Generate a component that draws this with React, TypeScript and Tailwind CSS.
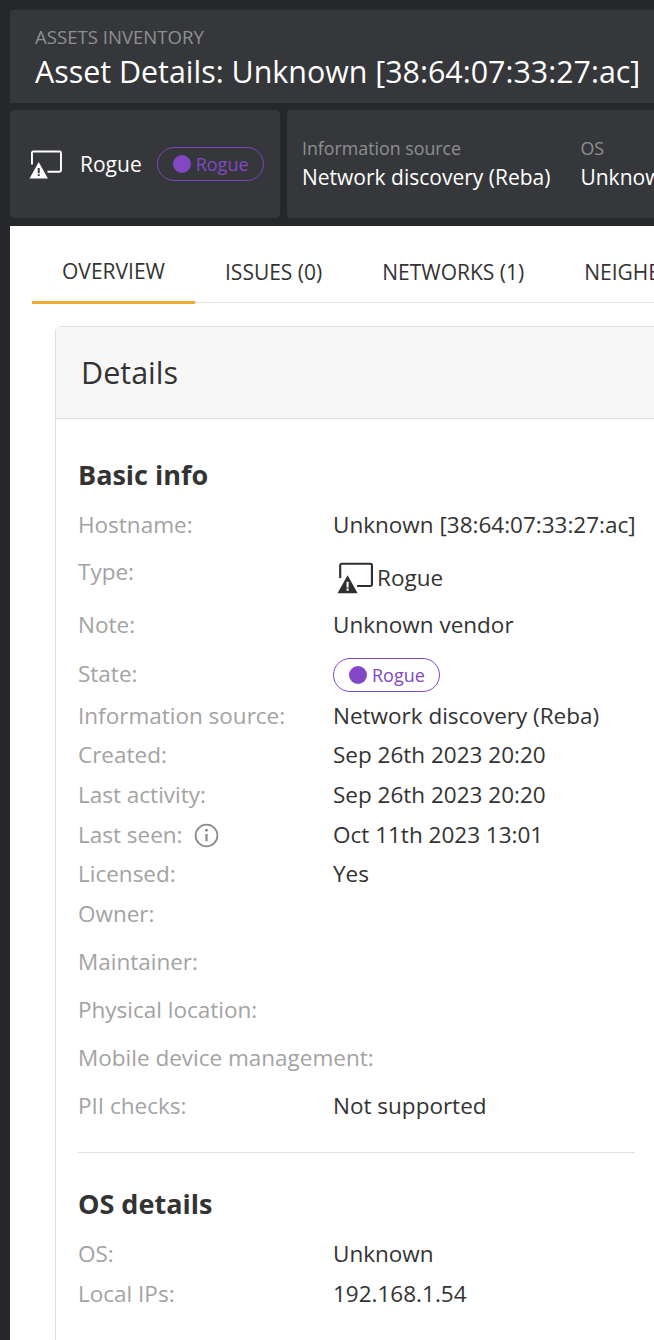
const font = "font-['Open_Sans',sans-serif]";

function RogueIcon({ className }: { className: string }) {
  return (
    <svg viewBox="0 0 34 30" fill="none" className={className}>
      <path d="M3 15V3a1.5 1.5 0 0 1 1.5-1.5h27A1.5 1.5 0 0 1 33 3v18a1.5 1.5 0 0 1-1.5 1.5H19" stroke="currentColor" strokeWidth="2" />
      <path fillRule="evenodd" clipRule="evenodd" d="M10 12.5 19.5 29.5H0.5ZM9 18.5h2v5.5H9ZM9 25h2v2H9Z" fill="currentColor" />
    </svg>
  );
}

function Badge() {
  return (
    <span className="mt-[1px] inline-flex h-[34px] w-[107px] items-center rounded-full border border-[#8347c6] pl-[15px] text-[18px] leading-[30px] text-[#8347c6]">
      <span className="mr-[5px] h-[18px] w-[18px] rounded-full bg-[#8347c6]" />
      Rogue
    </span>
  );
}

const rows: { label: string; value?: React.ReactNode; h: string }[] = [
  { label: "Hostname:", value: "Unknown [38:64:07:33:27:ac]", h: "h-[47px]" },
  {
    label: "Type:",
    value: (
      <span className="flex items-center pt-[6px]">
        <RogueIcon className="mr-[4px] ml-[4px] h-[32px] w-[36px] text-[#2f2f2f]" />
        Rogue
      </span>
    ),
    h: "h-[53px]",
  },
  { label: "Note:", value: "Unknown vendor", h: "h-[49px]" },
  { label: "State:", value: <Badge />, h: "h-[42px]" },
  { label: "Information source:", value: "Network discovery (Reba)", h: "h-[39px]" },
  { label: "Created:", value: "Sep 26th 2023 20:20", h: "h-[40px]" },
  { label: "Last activity:", value: "Sep 26th 2023 20:20", h: "h-[40px]" },
  { label: "Last seen:", value: "Oct 11th 2023 13:01", h: "h-[39px]" },
  { label: "Licensed:", value: "Yes", h: "h-[40px]" },
  { label: "Owner:", h: "h-[48px]" },
  { label: "Maintainer:", h: "h-[48px]" },
  { label: "Physical location:", h: "h-[48px]" },
  { label: "Mobile device management:", h: "h-[48px]" },
  { label: "PII checks:", value: "Not supported", h: "h-[40px]" },
];

export default function App() {
  return (
    <div className={`${font} h-[1340px] w-[654px] overflow-hidden bg-[#26272b] pt-[10px] pl-[10px]`}>
      <div className="h-[93px] w-[644px] rounded-tl-[3px] bg-[#36373a] pt-[15px] pl-[25px]">
        <div className="text-[18.6px] leading-[24px] text-[#8e8f91]">ASSETS INVENTORY</div>
        <div className="mt-[3px] text-[30.4px] leading-[40px] font-medium whitespace-nowrap text-white">Asset Details: Unknown [38:64:07:33:27:ac]</div>
      </div>

      <div className="mt-[7px] flex h-[108px] gap-[7px]">
        <div className="flex w-[270px] items-center rounded-[4px] bg-[#36373a] pl-[19px]">
          <RogueIcon className="h-[29px] w-[33px] text-white" />
          <span className="mt-[1px] ml-[18px] text-[21px] font-medium text-white">Rogue</span>
          <span className="ml-[15px] inline-flex h-[34px] w-[107px] items-center rounded-full border border-[#7a45b8] pl-[15px] text-[18px] text-[#8347c6]">
            <span className="mr-[5px] h-[18px] w-[18px] rounded-full bg-[#8347c6]" />
            Rogue
          </span>
        </div>
        <div className="flex w-[367px] gap-[30px] overflow-hidden rounded-l-[4px] bg-[#36373a] pt-[26px] pl-[15px]">
          <div className="shrink-0">
            <div className="text-[17.8px] leading-[25px] text-[#8e8f91]">Information source</div>
            <div className="mt-[3px] text-[21px] leading-[27px] whitespace-nowrap text-white">Network discovery (Reba)</div>
          </div>
          <div className="shrink-0">
            <div className="text-[17.8px] leading-[25px] text-[#8e8f91]">OS</div>
            <div className="mt-[3px] text-[21px] leading-[27px] whitespace-nowrap text-white">Unknown</div>
          </div>
        </div>
      </div>

      <div className="mt-[8px] h-[1200px] w-[644px] overflow-hidden bg-white">
        <div className="ml-[22px] flex h-[77px] border-b border-[#e3e3e3] text-[21px] whitespace-nowrap text-[#333]">
          <div className="h-[78px] w-[163px] shrink-0 border-b-[3px] border-[#eeab34] pt-[30px] text-center leading-[30px]">OVERVIEW</div>
          <div className="ml-[30px] shrink-0 pt-[31px] leading-[30px]">ISSUES (0)</div>
          <div className="ml-[60px] shrink-0 pt-[31px] leading-[30px]">NETWORKS (1)</div>
          <div className="ml-[60px] shrink-0 pt-[31px] leading-[30px]">NEIGHBORS</div>
        </div>

        <div className="mt-[23px] ml-[45px] w-[640px] rounded-tl-[6px] border border-[#dfdfdf] pb-[100px]">
          <div className="flex h-[92px] items-center border-b border-[#dfdfdf] bg-[#f7f7f7] pl-[25px] text-[30.5px] text-[#333]">Details</div>
          <div className="pt-[36px] pl-[22px]">
            <h2 className="text-[27px] leading-[40px] font-bold text-[#333]">Basic info</h2>
            <div className="mt-[13px]">
              {rows.map((r) => (
                <div key={r.label} className={`flex ${r.h} text-[22.5px] leading-[34px]`}>
                  <div className="flex w-[255px] shrink-0 items-start whitespace-nowrap text-[#a3a3a3]">
                    {r.label}
                    {r.label === "Last seen:" && (
                      <svg viewBox="0 0 24 24" fill="none" className="mt-[5px] ml-[11px] h-[25px] w-[25px] text-[#8c8c8c]">
                        <circle cx="12" cy="12" r="10.5" stroke="currentColor" strokeWidth="1.7" />
                        <path d="M12 10.5v7" stroke="currentColor" strokeWidth="2.2" />
                        <circle cx="12" cy="7" r="1.4" fill="currentColor" />
                      </svg>
                    )}
                  </div>
                  {r.value && <div className="whitespace-nowrap text-[#333]">{r.value}</div>}
                </div>
              ))}
            </div>
            <div className="mt-[23px] h-px w-[557px] bg-[#dfdfdf]" />
            <h2 className="mt-[31px] text-[27px] leading-[40px] font-bold text-[#333]">OS details</h2>
            <div className="mt-[13px]">
              <div className="flex h-[40px] text-[22.5px] leading-[34px]">
                <div className="w-[255px] text-[#a3a3a3]">OS:</div>
                <div className="text-[#333]">Unknown</div>
              </div>
              <div className="flex h-[40px] text-[22.5px] leading-[34px]">
                <div className="w-[255px] text-[#a3a3a3]">Local IPs:</div>
                <div className="text-[#333]">192.168.1.54</div>
              </div>
            </div>
          </div>
        </div>
      </div>
    </div>
  );
}
